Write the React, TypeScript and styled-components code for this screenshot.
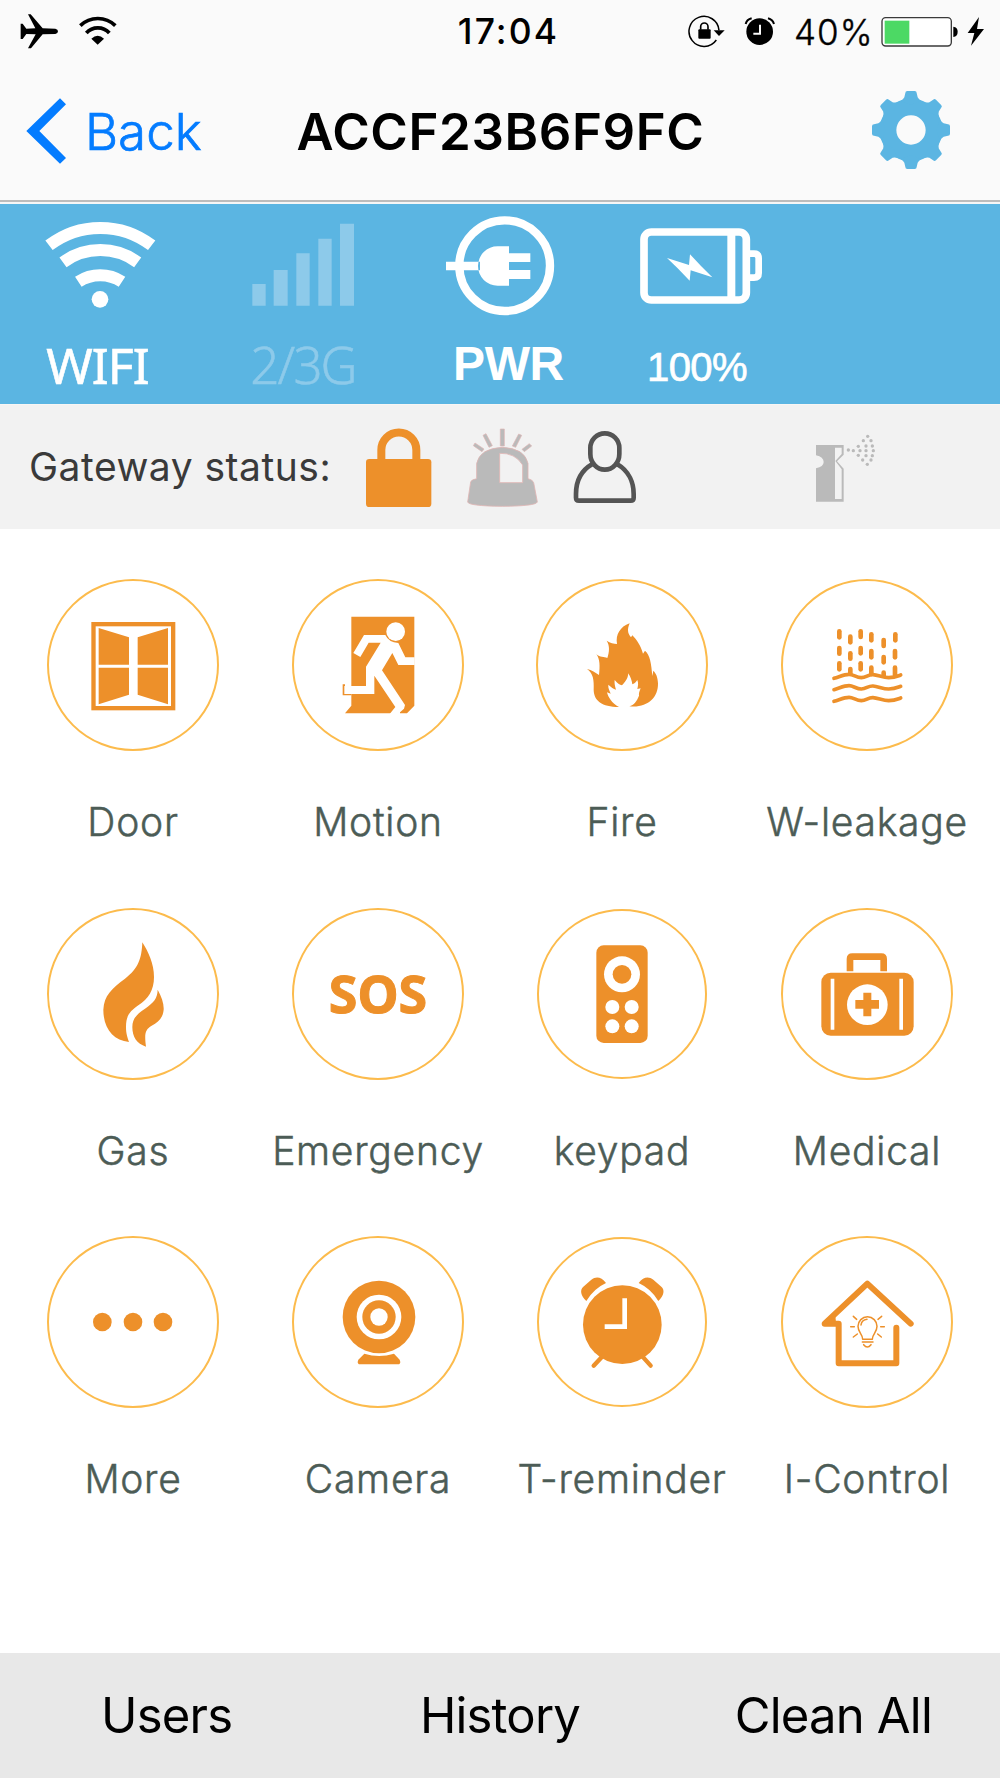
import React from "react";
import styled, { createGlobalStyle } from "styled-components";

const ORANGE = "#ed902a";
const BLUE = "#5bb5e2";
const GREY = "#bababa";
const PALE = "#8dcaea";

const GlobalStyle = createGlobalStyle`
  body { margin: 0; background: #fff; }
  svg { display: block; flex: none; }
`;

const Screen = styled.div`
  width: 1000px;
  height: 1778px;
  display: flex;
  flex-direction: column;
  overflow: hidden;
  background: #fff;
  font-family: Inter, "Liberation Sans", sans-serif;
`;

const Header = styled.header`
  height: 200px;
  background: #fafafa;
  border-bottom: 2px solid #bcbcbc;
  box-shadow: 0 2px 0 #f6f6f6;
  margin-bottom: 2px;
`;

const StatusBar = styled.div`
  height: 62px;
  display: grid;
  grid-template-columns: 440px 135px 1fr;
  align-items: center;
`;

const StatusLeft = styled.div`
  display: flex;
  align-items: center;
  padding-left: 20px;
  gap: 20px;
`;

const Clock = styled.div`
  text-align: center;
  font-size: 35.5px;
  font-weight: 500;
  line-height: 62px;
  padding: 1px 0 0 2px;
  letter-spacing: 2.1px;
  white-space: nowrap;
`;

const StatusRight = styled.div`
  display: flex;
  align-items: center;
  justify-content: flex-end;
  padding-right: 15px;
`;

const LockSlot = styled.div`
  margin-right: 15px;
`;

const Percent = styled.span`
  width: 87px;
  padding: 1px 0 0 18px;
  font-size: 35px;
  font-weight: 300;
  letter-spacing: 1px;
  -webkit-text-stroke: 0.4px currentColor;
  white-space: nowrap;
`;

const NavBar = styled.div`
  height: 138px;
  display: grid;
  grid-template-columns: 250px 500px 1fr;
  align-items: center;
`;

const BackButton = styled.div`
  display: flex;
  align-items: center;
  padding-left: 26px;
  gap: 18px;
  color: #047cff;
`;

const BackText = styled.span`
  font-size: 51px;
  font-weight: 300;
  letter-spacing: 0;
  -webkit-text-stroke: 0.7px currentColor;
  line-height: 60px;
  padding-top: 1px;
`;

const Title = styled.h1`
  margin: 0;
  text-align: center;
  font-size: 51px;
  font-weight: 600;
  line-height: 60px;
  letter-spacing: 0.6px;
  padding: 1px 0 0 1px;
  white-space: nowrap;
`;

const GearSlot = styled.div`
  padding: 0 0 2px 122px;
`;

const LinkPanel = styled.section`
  height: 200px;
  box-sizing: border-box;
  padding-top: 8px;
  background: ${BLUE};
  display: grid;
  grid-template-columns: 200px 206px 194px 202px;
`;

const LinkItem = styled.div`
  display: flex;
  flex-direction: column;
  align-items: center;
`;

const LinkText = styled.span<{ $font: string; $size: number; $weight: number; $shift: number; $color?: string; $spacing?: number; $drop?: number; $stroke?: number }>`
  font-family: ${(p) => p.$font}, sans-serif;
  font-size: ${(p) => p.$size}px;
  font-weight: ${(p) => p.$weight};
  color: ${(p) => p.$color ?? "#fff"};
  letter-spacing: ${(p) => p.$spacing ?? 0}px;
  margin-left: ${(p) => p.$shift}px;
  margin-top: ${(p) => p.$drop ?? 0}px;
  -webkit-text-stroke: ${(p) => p.$stroke ?? 0}px currentColor;
  line-height: 60px;
  white-space: nowrap;
`;

const GatewayRow = styled.section`
  height: 125px;
  background: #f2f2f2;
  display: flex;
  align-items: center;
  box-shadow: inset 0 1px 0 #f8f6f4;
`;

const GatewayLabel = styled.span`
  width: 337px;
  padding-left: 29px;
  font-size: 39px;
  font-weight: 400;
  letter-spacing: 0.5px;
  color: #3a3a3a;
  white-space: nowrap;
`;

const GatewayIcon = styled.div<{ $gap: number }>`
  margin-left: ${(p) => p.$gap}px;
`;

const SensorGrid = styled.main`
  flex: 1;
  padding: 50px 10px 0;
  display: grid;
  grid-template-columns: 246px 244px 244px 246px;
  grid-auto-rows: 328.5px;
`;

const Tile = styled.div`
  display: flex;
  flex-direction: column;
  align-items: center;
`;

const Ring = styled.div<{ $size: number }>`
  width: ${(p) => p.$size}px;
  height: ${(p) => p.$size}px;
  margin: ${(p) => (172 - p.$size) / 2}px 0;
  box-sizing: border-box;
  border: 2px solid #fcbb4c;
  border-radius: 50%;
  display: flex;
  align-items: center;
  justify-content: center;
`;

const Sos = styled.span`
  font-family: "Noto Sans", sans-serif;
  font-size: 52px;
  font-weight: 700;
  line-height: 60px;
  padding-bottom: 1px;
  color: ${ORANGE};
  -webkit-text-stroke: 1px ${ORANGE};
  stroke-linejoin: round;
`;

const TileLabel = styled.span`
  margin-top: 47px;
  font-size: 39px;
  font-weight: 300;
  line-height: 48px;
  letter-spacing: 0.75px;
  color: #4c5c56;
  -webkit-text-stroke: 0.5px currentColor;
  white-space: nowrap;
`;

const BottomBar = styled.nav`
  height: 125px;
  background: #e8e8e8;
  display: grid;
  grid-template-columns: repeat(3, 1fr);
`;

const BottomButton = styled.div`
  text-align: center;
  font-size: 49px;
  font-weight: 400;
  line-height: 125px;
  letter-spacing: -0.8px;
`;

const toothAngles = [0, 45, 90, 135, 180, 225, 270, 315];

const Gear = () => (
  <svg width="78" height="78" viewBox="-117 -117 234 234" fill={BLUE}>
    <path fillRule="evenodd" d="M0-94a94 94 0 1 0 0 188a94 94 0 1 0 0-188M0-44a44 44 0 1 1 0 88a44 44 0 1 1 0-88" />
    {toothAngles.map((a) => (
      <path key={a} transform={`rotate(${a})`} d="M-17-111Q-17-117-11-117H11Q17-117 17-111L20-98Q23-92 32-87L0-76L-32-87Q-23-92-20-98Z" />
    ))}
  </svg>
);

const wave = "C965 348 975 343 988 343S1010 353 1025 353S1045 343 1060 344S1090 353 1107 353S1130 350 1143 345";

const drops = [
  [959, 214, 232], [959, 264, 281], [959, 310, 328],
  [992, 230, 247], [992, 280, 296], [992, 327, 340],
  [1023, 214, 231], [1023, 264, 280], [1023, 310, 328],
  [1055, 223, 241], [1055, 273, 292], [1055, 323, 342],
  [1092, 240, 258], [1092, 291, 307], [1092, 338, 346],
  [1127, 223, 241], [1126, 273, 292], [1126, 323, 345],
];

const sprayDots = [
  [1045, 750], [1060, 752], [1075, 739], [1075, 766], [1080, 752], [1090, 722],
  [1098, 738], [1098, 752], [1098, 767], [1088, 780], [1103, 709], [1113, 722],
  [1117, 738], [1120, 752], [1117, 767], [1113, 780], [1102, 793],
];

type Sensor = { label: string; view?: string; size?: number; art: React.ReactNode };

const sensors: Sensor[] = [
  {
    label: "Door",
    view: "57 63 504 504",
    art: (
      <>
        <rect x="190.5" y="192.5" width="239" height="252" fill="none" stroke={ORANGE} strokeWidth="13" />
        <path d="M206 204L297 232V314H206ZM206 323H297V404L206 433ZM323 232L414 204V314H323ZM323 323H414V433L323 404Z" />
      </>
    ),
  },
  {
    label: "Motion",
    view: "792 63 504 504",
    art: (
      <>
        <path d="M964 170H1153V437L1131 460H945L964 437Z" />
        <path d="M938 373H945V380H964V406H938Z" />
        <circle cx="1097" cy="215" r="28" fill="#fff" />
        <path
          fill="#fff"
          d="M1002 225H1066Q1076 247 1105 249L1126 292H1154V315H1105L1087 279L1056 331L1125 435L1122 446L1110 457V462H1079L1096 441L1033 347V402H943V378H1008V320L1052 248H1016L991 291L970 279Z"
        />
      </>
    ),
  },
  {
    label: "Fire",
    view: "54 63 504 504",
    art: (
      <path d="M329 190C300 200 286 225 291 252C282 250 270 250 260 242C270 258 268 275 262 294C252 290 240 292 229 283C240 297 240 318 237 345C226 338 216 330 201 327C220 340 222 360 221 390C222 422 245 441 297 441C275 430 265 412 261 397L272 401C268 390 264 385 265 374C274 382 280 386 288 389C284 376 283 368 284 360C293 370 298 374 306 376C316 366 326 352 324 340C332 350 335 360 337 373C345 370 348 365 352 360C356 370 354 378 352 387L362 385C358 395 356 400 357 407C350 425 342 434 328 439C380 445 415 415 414 370C413 350 408 340 400 332L397 348C394 310 390 285 375 272L369 281C362 255 350 240 337 226L333 232C323 220 321 208 329 190Z" />
    ),
  },
  {
    label: "W-leakage",
    view: "790 63 504 504",
    art: (
      <g fill="none" stroke={ORANGE} strokeLinecap="round">
        {drops.map(([x, a, b]) => (
          <path key={`${x}-${a}`} d={`M${x} ${a}V${b}`} strokeWidth="14" />
        ))}
        {[0, 34, 69].map((dy) => (
          <path key={dy} transform={`translate(0 ${dy})`} d={`M943 355${wave}`} strokeWidth="11" />
        ))}
      </g>
    ),
  },
  {
    label: "Gas",
    view: "57 59 504 504",
    art: (
      <path d="M337 156C355 185 372 220 372 260C372 300 355 325 325 345C300 363 288 375 288 410C288 430 292 440 297 455C250 450 220 415 220 358C222 315 245 295 285 265C325 235 335 205 337 156ZM383 298C395 320 402 340 401 358C398 385 385 395 365 406C345 418 343 430 348 469C320 460 307 440 307 410C307 385 320 372 345 355C372 335 382 325 383 298Z" />
    ),
  },
  { label: "Emergency", art: null },
  {
    label: "keypad",
    size: 170,
    view: "58 62 498 498",
    art: (
      <>
        <rect x="230" y="165" width="154" height="293" rx="22" />
        <circle cx="307" cy="252" r="54" fill="#fff" />
        <circle cx="307" cy="252" r="28" />
        {[350, 408].map((y) => [278, 336].map((x) => <circle key={`${x}${y}`} cx={x} cy={y} r="21" fill="#fff" />))}
      </>
    ),
  },
  {
    label: "Medical",
    view: "790 59 504 504",
    art: (
      <>
        <path d="M991 243V206Q991 199 998 199H1085Q1092 199 1092 206V243" fill="none" stroke={ORANGE} strokeWidth="20" />
        <rect x="905" y="247" width="277" height="189" rx="28" />
        <path fill="#fff" d="M933 265H944V418H933ZM1139 265H1150V418H1139Z" />
        <circle cx="1043" cy="343" r="61" fill="#fff" />
        <path d="M1031 307H1055V329H1078V355H1055V378H1031V355H1007V329H1031Z" />
      </>
    ),
  },
  {
    label: "More",
    view: "57 54 504 504",
    art: [217, 309, 399].map((x) => <circle key={x} cx={x} cy="306" r="28" />),
  },
  {
    label: "Camera",
    view: "792 54 504 504",
    art: (
      <>
        <circle cx="1047" cy="291" r="109" />
        <circle cx="1047" cy="291" r="67" fill="#fff" />
        <circle cx="1047" cy="291" r="50" />
        <circle cx="1047" cy="291" r="26" fill="#fff" />
        <path d="M1003 401Q1047 415 1092 401L1109 419Q1115 433 1102 433H992Q979 433 985 419Z" />
      </>
    ),
  },
  {
    label: "T-reminder",
    size: 170,
    view: "58 56 498 498",
    art: (
      <>
        <circle cx="308" cy="313" r="118" />
        <path d="M315 234V319H255" fill="none" stroke="#fff" strokeWidth="14" />
        <path d="M200 242C183 225 180 209 191 199L215 178C230 167 245 170 259 188Q222 205 200 242ZM416 242C433 225 436 209 425 199L401 178C386 167 371 170 357 188Q394 205 416 242Z" />
        <path d="M250 406L222 436M366 406L393 436" fill="none" stroke={ORANGE} strokeWidth="13" strokeLinecap="round" />
      </>
    ),
  },
  {
    label: "I-Control",
    view: "790 54 504 504",
    art: (
      <g fill="none" stroke={ORANGE} strokeLinecap="round" strokeLinejoin="round">
        <path d="M1130 323V430H957V311H915L1043 191L1173 311" strokeWidth="18" />
        <path d="M921 309L945 287L947 308Z" fill={ORANGE} strokeWidth="4" />
        <path d="M1029 358C1029 342 1015 338 1015 319A28 28 0 0 1 1072 319C1072 338 1058 342 1058 358ZM1028 366H1060M1032 374Q1043 388 1054 374M1024 315Q1026 300 1042 298" strokeWidth="4.5" />
        <path d="M1001 289L1011 298M1086 289L1075 298M993 320H1004M1083 320H1094M1001 351L1013 342M1085 351L1074 342" strokeWidth="4.5" />
      </g>
    ),
  },
];

export default function App() {
  return (
    <Screen>
      <GlobalStyle />
      <Header>
        <StatusBar>
          <StatusLeft>
            <svg width="38" height="35" viewBox="60 42 114 105">
              <path d="M62 71H68L79 86L106 85L84 43H92L128 85L166 86Q174 88 174 94Q174 101 166 102L128 103L93 145H84L107 103L79 102L68 117H62Z" />
            </svg>
            <svg width="40" height="35" viewBox="234 44 120 105">
              <path d="M241 79A75 75 0 0 1 346 79" fill="none" stroke="#000" strokeWidth="11" />
              <path d="M259 101A46 46 0 0 1 328 101" fill="none" stroke="#000" strokeWidth="11" />
              <path d="M274 118Q293 100 312 118L293 136Z" />
            </svg>
          </StatusLeft>
          <Clock>17:04</Clock>
          <StatusRight>
            <LockSlot>
              <svg width="38" height="35" viewBox="562 43 114 105">
                <path d="M650 121A45 45 0 1 1 658 92" fill="none" stroke="#000" strokeWidth="4.5" />
                <path d="M642 92H675L658 109Z" />
                <rect x="596" y="89" width="37" height="28" rx="3" />
                <path d="M603 90V81A11 11 0 0 1 625 81V90" fill="none" stroke="#000" strokeWidth="5" />
              </svg>
            </LockSlot>
            <svg width="36" height="35" viewBox="722 43 108 105">
              <circle cx="781" cy="96" r="40" />
              <path d="M782 75V102H762" fill="none" stroke="#fafafa" strokeWidth="6" />
              <path d="M739 73Q742 60 757 56M824 73Q820 60 806 56" fill="none" stroke="#000" strokeWidth="6" />
            </svg>
            <Percent>40%</Percent>
            <svg width="86" height="35" viewBox="1143 43 258 105">
              <rect x="1146" y="54" width="208" height="85" rx="11" fill="#fff" stroke="#3a3a3a" strokeWidth="4" />
              <rect x="1154" y="63" width="74" height="69" fill="#4cd964" />
              <path d="M1360 81Q1373 82 1373 96T1360 112Z" />
            </svg>
            <svg width="18" height="35" viewBox="1401 42 54 105">
              <path d="M1437 51L1403 99H1423L1413 137L1452 87H1431Z" />
            </svg>
          </StatusRight>
        </StatusBar>
        <NavBar>
          <BackButton>
            <svg width="41" height="66" viewBox="78 295 123 198">
              <path d="M180 296L198 314L118 394L198 475L180 492L79 394Z" fill="currentColor" />
            </svg>
            <BackText>Back</BackText>
          </BackButton>
          <Title>ACCF23B6F9FC</Title>
          <GearSlot>
            <Gear />
          </GearSlot>
        </NavBar>
      </Header>

      <LinkPanel>
        <LinkItem>
          <svg width="120" height="106" viewBox="120 36 360 318">
            <g fill="none" stroke="#fff" strokeWidth="36">
              <path d="M147 136A253 253 0 0 1 455 136" />
              <path d="M189 187A189 189 0 0 1 413 187" />
              <path d="M235 245A120 120 0 0 1 366 245" />
            </g>
            <circle cx="300" cy="298" r="25" fill="#fff" />
          </svg>
          <LinkText $font="'Noto Sans'" $size={50} $weight={400} $shift={-5} $spacing={-0.9} $drop={17} $stroke={0.6}>WIFI</LinkText>
        </LinkItem>
        <LinkItem>
          <svg width="120" height="106" viewBox="729 36 360 318" fill={PALE}>
            <path d="M757 252H797V317H757ZM821 210H863V317H821ZM889 160H929V317H889ZM955 116H995V317H955ZM1020 71H1062V317H1020Z" />
          </svg>
          <LinkText $font="'Noto Sans'" $size={51} $weight={300} $shift={0} $spacing={-1.9} $drop={16} $stroke={0.5} $color={PALE}>2/3G</LinkText>
        </LinkItem>
        <LinkItem>
          <svg width="120" height="106" viewBox="1329 36 360 318" fill="#fff">
            <circle cx="1514" cy="197" r="136" fill="none" stroke="#fff" strokeWidth="25" />
            <path d="M1338 185H1440V211H1338ZM1527 139H1493A59 59 0 0 0 1493 257H1527V237H1591V210H1527V186H1591V160H1527Z" />
          </svg>
          <LinkText $font="'Liberation Sans'" $size={48} $weight={700} $shift={11} $spacing={-0.4} $drop={16}>PWR</LinkText>
        </LinkItem>
        <LinkItem>
          <svg width="124" height="106" viewBox="417 36 372 318">
            <g fill="none" stroke="#fff">
              <rect x="432" y="96" width="307" height="204" rx="22" strokeWidth="23" />
              <path d="M694 96V300" strokeWidth="24" />
              <path d="M748 161H762Q776 161 776 175V219Q776 233 762 233H748" strokeWidth="20" />
            </g>
            <path d="M501 174L567 195L570 163L603 198L637 232L572 211L569 242L533 205Z" fill="#fff" />
          </svg>
          <LinkText $font="'Liberation Sans'" $size={40} $weight={400} $shift={-8} $spacing={-0.6} $drop={19} $stroke={0.7}>100%</LinkText>
        </LinkItem>
      </LinkPanel>

      <GatewayRow>
        <GatewayLabel>Gateway status:</GatewayLabel>
        <GatewayIcon $gap={0}>
          <svg width="66" height="125" viewBox="1098 612 198 375" fill={ORANGE}>
            <rect x="1098" y="777" width="196" height="144" rx="10" />
            <path d="M1144 780V750A52 52 0 0 1 1249 750V780" fill="none" stroke={ORANGE} strokeWidth="24" />
          </svg>
        </GatewayIcon>
        <GatewayIcon $gap={35}>
          <svg width="71" height="125" viewBox="1401 612 213 375" fill={GREY} stroke="#dfb5b3" strokeWidth="2.5">
            <path d="M1412 846Q1413 839 1430 836V790Q1440 745 1507 742Q1574 745 1584 790V836Q1598 839 1601 848L1612 906Q1608 918 1507 919Q1406 918 1403 906Z" />
            <path d="M1499 760Q1545 758 1568 795V848H1499Z" fill="#f2f2f2" />
            <path d="M1501 687H1513V738H1501ZM1556 702L1565 706L1547 742L1537 738ZM1588 731L1595 738L1573 755L1566 748ZM1458 701L1449 706L1467 742L1477 737ZM1425 729L1420 737L1446 755L1452 747Z" strokeWidth="2" />
          </svg>
        </GatewayIcon>
        <GatewayIcon $gap={35}>
          <svg width="64" height="125" viewBox="219 612 192 375" fill="none" stroke="#545454" strokeWidth="14">
            <path d="M271 744A43.500 44 0 0 1 358 744V762A43.500 47 0 0 1 271 762Z" />
            <path d="M276 793C240 814 228 850 228 882V893Q228 902 237 902H392Q401 902 401 893V882C401 850 388 814 352 793" />
          </svg>
        </GatewayIcon>
        <GatewayIcon $gap={178}>
          <svg width="62" height="125" viewBox="945 612 186 375" fill={GREY}>
            <path d="M948 735H1031V764L1011 784L1031 806V905H948V805Q971 800 971 786Q971 771 948 766Z" />
            <path d="M1005 743H1025V762L1006 783L1025 808V897H1005Z" fill="#f2f2f2" />
            <path d="M1033 768L1014 784L1033 803Z" fill="#f2f2f2" />
            {sprayDots.map(([x, y]) => (
              <circle key={`${x}-${y}`} cx={x} cy={y} r="5" />
            ))}
          </svg>
        </GatewayIcon>
      </GatewayRow>

      <SensorGrid>
        {sensors.map((s) => {
          const size = s.size ?? 172;
          return (
            <Tile key={s.label}>
              <Ring $size={size}>
                {s.view ? (
                  <svg width={size - 4} height={size - 4} viewBox={s.view} fill={ORANGE}>
                    {s.art}
                  </svg>
                ) : (
                  <Sos>SOS</Sos>
                )}
              </Ring>
              <TileLabel>{s.label}</TileLabel>
            </Tile>
          );
        })}
      </SensorGrid>

      <BottomBar>
        <BottomButton>Users</BottomButton>
        <BottomButton>History</BottomButton>
        <BottomButton>Clean All</BottomButton>
      </BottomBar>
    </Screen>
  );
}
